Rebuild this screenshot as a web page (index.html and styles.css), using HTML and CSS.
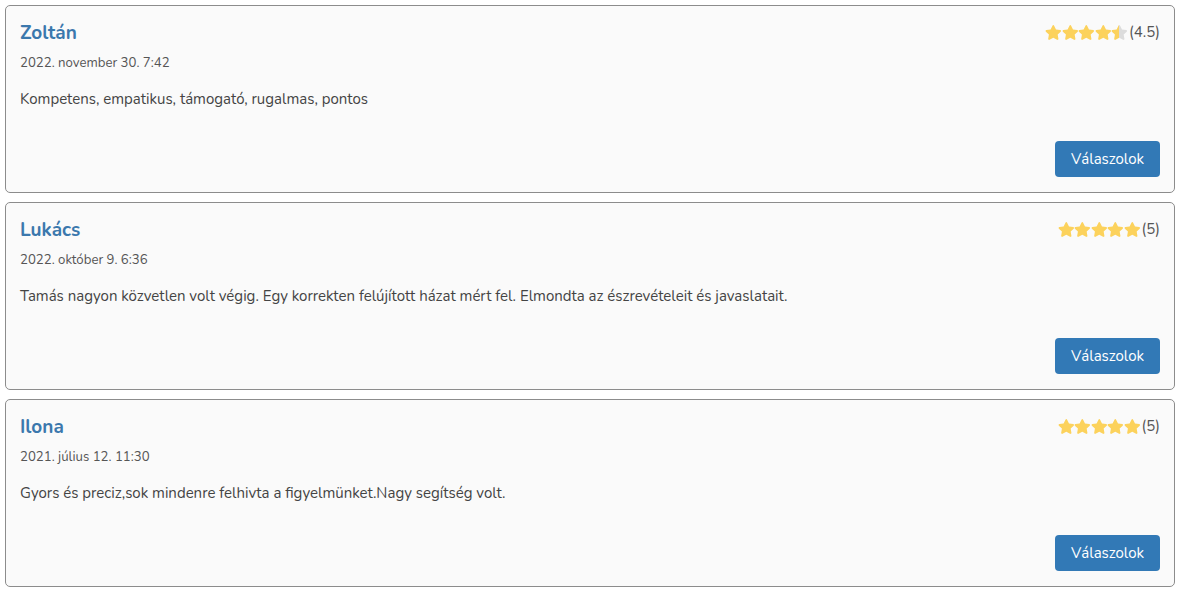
FILE: index.html
```html
<!DOCTYPE html>
<html lang="hu">
<head>
<meta charset="utf-8">
<title>Értékelések</title>
<link rel="stylesheet" href="styles.css">
</head>
<body>
<svg width="0" height="0" class="defs">
  <defs>
    <symbol id="star" viewBox="0 0 576 512">
      <path d="M259.3 17.8L194 150.2 47.9 171.5c-26.2 3.8-36.7 36.1-17.7 54.6l105.7 103-25 145.5c-4.5 26.3 23.2 46 46.4 33.7L288 439.6l130.7 68.7c23.2 12.2 50.9-7.4 46.4-33.7l-25-145.5 105.7-103c19-18.5 8.5-50.8-17.7-54.6L382 150.2 316.7 17.8c-11.7-23.6-45.6-23.9-57.4 0z"/>
    </symbol>
    <linearGradient id="half">
      <stop offset="50%" stop-color="#fcd25c"/>
      <stop offset="50%" stop-color="#dcdcdc"/>
    </linearGradient>
  </defs>
</svg>
<div class="reviews">
  <div class="card">
    <div class="head">
      <h4 class="name">Zoltán</h4>
      <div class="rating">
        <svg class="star"><use href="#star"/></svg>
        <svg class="star"><use href="#star"/></svg>
        <svg class="star"><use href="#star"/></svg>
        <svg class="star"><use href="#star"/></svg>
        <svg class="star half"><use href="#star"/></svg>
        <span class="score">(4.5)</span>
      </div>
    </div>
    <div class="date">2022. november 30. 7:42</div>
    <p class="text">Kompetens, empatikus, támogató, rugalmas, pontos</p>
    <div class="actions"><button class="btn">Válaszolok</button></div>
  </div>
  <div class="card">
    <div class="head">
      <h4 class="name">Lukács</h4>
      <div class="rating">
        <svg class="star"><use href="#star"/></svg>
        <svg class="star"><use href="#star"/></svg>
        <svg class="star"><use href="#star"/></svg>
        <svg class="star"><use href="#star"/></svg>
        <svg class="star"><use href="#star"/></svg>
        <span class="score">(5)</span>
      </div>
    </div>
    <div class="date">2022. október 9. 6:36</div>
    <p class="text">Tamás nagyon közvetlen volt végig. Egy korrekten felújított házat mért fel. Elmondta az észrevételeit és javaslatait.</p>
    <div class="actions"><button class="btn">Válaszolok</button></div>
  </div>
  <div class="card">
    <div class="head">
      <h4 class="name">Ilona</h4>
      <div class="rating">
        <svg class="star"><use href="#star"/></svg>
        <svg class="star"><use href="#star"/></svg>
        <svg class="star"><use href="#star"/></svg>
        <svg class="star"><use href="#star"/></svg>
        <svg class="star"><use href="#star"/></svg>
        <span class="score">(5)</span>
      </div>
    </div>
    <div class="date">2021. július 12. 11:30</div>
    <p class="text">Gyors és preciz,sok mindenre felhivta a figyelmünket.Nagy segítség volt.</p>
    <div class="actions"><button class="btn">Válaszolok</button></div>
  </div>
</div>
</body>
</html>
```
FILE: styles.css
```css
html, body {
  margin: 0;
  padding: 0;
  background: #ffffff;
}
body {
  font-family: "Nunito", "Lato", "Noto Sans", sans-serif;
  color: #444;
}
.defs {
  position: absolute;
  width: 0;
  height: 0;
}
.reviews {
  padding: 5px;
  display: flex;
  flex-direction: column;
  gap: 9px;
}
.card {
  background: #fafafa;
  border: 1px solid #8c8c8c;
  border-radius: 5px;
  padding: 14px;
  height: 188px;
  box-sizing: border-box;
  display: flex;
  flex-direction: column;
}
.head {
  display: flex;
  justify-content: space-between;
  align-items: flex-start;
}
.name {
  margin: 0;
  font-size: 19px;
  line-height: 26px;
  font-weight: 700;
  color: #3b78ad;
}
.rating {
  display: flex;
  align-items: center;
  height: 24px;
}
.star {
  width: 16.6px;
  height: 15px;
  fill: #fcd25c;
}
.star.half {
  fill: url(#half);
}
.score {
  font-size: 15px;
  color: #555;
  margin-left: 1px;
}
.date {
  margin-top: 8px;
  font-size: 13.2px;
  line-height: 18px;
  color: #555;
}
.text {
  margin: 17px 0 0 0;
  font-size: 15px;
  line-height: 20px;
  color: #444;
}
.actions {
  margin-top: auto;
  display: flex;
  justify-content: flex-end;
}
.btn {
  background: #3279b6;
  color: #fff;
  border: 0;
  border-radius: 4px;
  font-family: inherit;
  font-size: 15px;
  padding: 0;
  width: 105px;
  height: 36px;
  margin-bottom: 1px;
}
```
